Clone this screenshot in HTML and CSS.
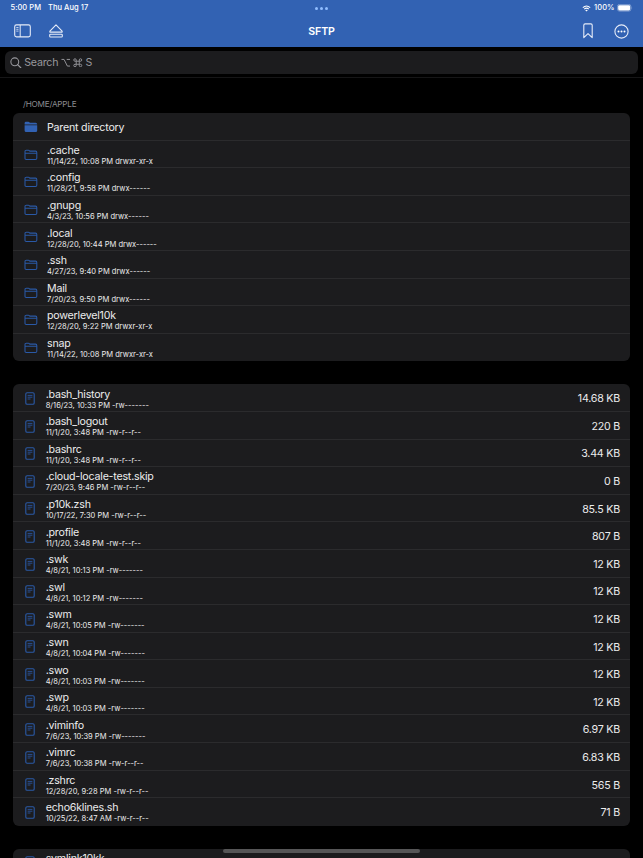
FILE: index.html
```
<!DOCTYPE html>
<html lang="en">
<head>
<meta charset="utf-8">
<title>SFTP</title>
<link rel="stylesheet" href="styles.css">
</head>
<body>
<svg class="defs" aria-hidden="true">
  <symbol id="folder" viewBox="0 0 14 12"><path d="M1 9.200V2.500q0-1.300 1.300-1.300h2.100q.5 0 .9.400l.5.500h5.700q1.300 0 1.300 1.300v5.800q0 1.300-1.300 1.300H2.300q-1.300 0-1.300-1.300zM1 4.300h11.800" fill="none" stroke="currentColor" stroke-width="1.050"/></symbol>
  <symbol id="folder-fill" viewBox="0 0 14 12"><path d="M.6 3.600V2.200Q.6.8 2 .8h2.400q.6 0 1 .4l.5.500h5.700q1.600 0 1.600 1.500v.4zM.6 4.200h12.600v5.200q0 1.500-1.500 1.500H2.100Q.6 10.900.6 9.400z" fill="currentColor"/></symbol>
  <symbol id="doc" viewBox="0 0 10 13"><rect x=".8" y=".8" width="8.400" height="11.400" rx="1.300" fill="none" stroke="currentColor" stroke-width="1.100"/><path d="M2.600 3.400h4.800M2.600 5.200h4.800M2.600 7h2.900" fill="none" stroke="currentColor" stroke-width=".85"/></symbol>
</svg>
<header class="top">
  <div class="status">
    <div class="status-left"><span>5:00 PM</span><span>Thu Aug 17</span></div>
    <div class="dots"><i></i><i></i><i></i></div>
    <div class="status-right">
      <svg class="wifi" viewBox="0 0 10 8"><path d="M.8 3Q5-.8 9.200 3M2.400 4.700q2.600-2.200 5.200 0" fill="none" stroke="#fff" stroke-width="1.200"/><path d="M3.500 5.900q1.500-1.200 3 0L5 7.400z" fill="#fff"/></svg>
      <span class="percent">100%</span>
      <svg class="battery" viewBox="0 0 17 8"><rect x=".4" y=".4" width="14.400" height="7.200" rx="2.200" fill="none" stroke="#9cb3dc" stroke-width=".7"/><rect x="1.200" y="1.200" width="12.800" height="5.600" rx="1.400" fill="#fff"/><path d="M15.600 2.800q1 1.200 0 2.400z" fill="#9cb3dc"/></svg>
    </div>
  </div>
  <nav class="nav">
    <div class="nav-side">
      <svg class="sidebar" viewBox="0 0 17 14"><rect x=".7" y=".9" width="15.600" height="12" rx="1.800" fill="none" stroke="#e6ecf8" stroke-width="1.100"/><path d="M6.200 1v12" stroke="#e6ecf8"/><path d="M2.300 3.500h2.200M2.300 5.300h2.200M2.300 7.100h2.200" stroke="#e6ecf8" stroke-width=".8"/></svg>
      <svg class="eject" viewBox="0 0 14 14"><path d="M7 .9 13.100 7.200q.4.900-.5.900H1.400q-.9 0-.5-.9z" fill="none" stroke="#e6ecf8" stroke-width="1.100" stroke-linejoin="round"/><rect x=".7" y="10.200" width="12.600" height="2.800" rx=".8" fill="none" stroke="#e6ecf8" stroke-width="1.100"/></svg>
    </div>
    <h1>SFTP</h1>
    <div class="nav-side end">
      <svg class="bookmark" viewBox="0 0 10 16"><path d="M.8 14.600V2.200Q.8.900 2.100.9h5.800q1.300 0 1.300 1.300v12.400L5 10.600z" fill="none" stroke="#e6ecf8" stroke-width="1.100" stroke-linejoin="round"/></svg>
      <svg class="more" viewBox="0 0 15 15"><circle cx="7.500" cy="7.500" r="6.600" fill="none" stroke="#e6ecf8" stroke-width="1.100"/><g fill="#fff"><circle cx="4.500" cy="7.500" r="1"/><circle cx="7.500" cy="7.500" r="1"/><circle cx="10.500" cy="7.500" r="1"/></g></svg>
    </div>
  </nav>
</header>
<div class="searchbar">
  <div class="search">
    <svg class="glass" viewBox="0 0 12 12"><circle cx="5" cy="5" r="4.100" fill="none" stroke="#98989d" stroke-width="1.100"/><path d="m8 8 3.200 3.200" stroke="#98989d" stroke-width="1.300" stroke-linecap="round"/></svg>
    <span>Search</span>
    <svg class="key" viewBox="0 0 10 10"><path d="M.5 1.500h2.700l3.500 7h2.800M6 1.500h3.500" fill="none" stroke="#98989d"/></svg>
    <svg class="key" viewBox="0 0 10 10"><path d="M3.400 3.400h3.200v3.200H3.400zM3.400 3.400H2.100A1.300 1.300 0 1 1 3.400 2.100zM6.600 3.400h1.300A1.300 1.300 0 1 0 6.600 2.100zM3.400 6.600H2.100A1.300 1.300 0 1 0 3.400 7.900zM6.600 6.600h1.300A1.300 1.300 0 1 1 6.600 7.900z" fill="none" stroke="#98989d" stroke-width=".95"/></svg>
    <span>S</span>
  </div>
</div>
<main>
  <h2>/HOME/APPLE</h2>
  <ul class="group folders">
    <li class="parent"><svg><use href="#folder-fill"/></svg><div><b>Parent directory</b></div></li>
    <li><svg><use href="#folder"/></svg><div><b>.cache</b><small>11/14/22, 10:08 PM drwxr-xr-x</small></div></li>
    <li><svg><use href="#folder"/></svg><div><b>.config</b><small>11/28/21, 9:58 PM drwx------</small></div></li>
    <li><svg><use href="#folder"/></svg><div><b>.gnupg</b><small>4/3/23, 10:56 PM drwx------</small></div></li>
    <li><svg><use href="#folder"/></svg><div><b>.local</b><small>12/28/20, 10:44 PM drwx------</small></div></li>
    <li><svg><use href="#folder"/></svg><div><b>.ssh</b><small>4/27/23, 9:40 PM drwx------</small></div></li>
    <li><svg><use href="#folder"/></svg><div><b>Mail</b><small>7/20/23, 9:50 PM drwx------</small></div></li>
    <li><svg><use href="#folder"/></svg><div><b>powerlevel10k</b><small>12/28/20, 9:22 PM drwxr-xr-x</small></div></li>
    <li><svg><use href="#folder"/></svg><div><b>snap</b><small>11/14/22, 10:08 PM drwxr-xr-x</small></div></li>
  </ul>
  <ul class="group files">
    <li><svg><use href="#doc"/></svg><div><b>.bash_history</b><small>8/16/23, 10:33 PM -rw-------</small></div><em>14.68 KB</em></li>
    <li><svg><use href="#doc"/></svg><div><b>.bash_logout</b><small>11/1/20, 3:48 PM -rw-r--r--</small></div><em>220 B</em></li>
    <li><svg><use href="#doc"/></svg><div><b>.bashrc</b><small>11/1/20, 3:48 PM -rw-r--r--</small></div><em>3.44 KB</em></li>
    <li><svg><use href="#doc"/></svg><div><b>.cloud-locale-test.skip</b><small>7/20/23, 9:46 PM -rw-r--r--</small></div><em>0 B</em></li>
    <li><svg><use href="#doc"/></svg><div><b>.p10k.zsh</b><small>10/17/22, 7:30 PM -rw-r--r--</small></div><em>85.5 KB</em></li>
    <li><svg><use href="#doc"/></svg><div><b>.profile</b><small>11/1/20, 3:48 PM -rw-r--r--</small></div><em>807 B</em></li>
    <li><svg><use href="#doc"/></svg><div><b>.swk</b><small>4/8/21, 10:13 PM -rw-------</small></div><em>12 KB</em></li>
    <li><svg><use href="#doc"/></svg><div><b>.swl</b><small>4/8/21, 10:12 PM -rw-------</small></div><em>12 KB</em></li>
    <li><svg><use href="#doc"/></svg><div><b>.swm</b><small>4/8/21, 10:05 PM -rw-------</small></div><em>12 KB</em></li>
    <li><svg><use href="#doc"/></svg><div><b>.swn</b><small>4/8/21, 10:04 PM -rw-------</small></div><em>12 KB</em></li>
    <li><svg><use href="#doc"/></svg><div><b>.swo</b><small>4/8/21, 10:03 PM -rw-------</small></div><em>12 KB</em></li>
    <li><svg><use href="#doc"/></svg><div><b>.swp</b><small>4/8/21, 10:03 PM -rw-------</small></div><em>12 KB</em></li>
    <li><svg><use href="#doc"/></svg><div><b>.viminfo</b><small>7/6/23, 10:39 PM -rw-------</small></div><em>6.97 KB</em></li>
    <li><svg><use href="#doc"/></svg><div><b>.vimrc</b><small>7/6/23, 10:38 PM -rw-r--r--</small></div><em>6.83 KB</em></li>
    <li><svg><use href="#doc"/></svg><div><b>.zshrc</b><small>12/28/20, 9:28 PM -rw-r--r--</small></div><em>565 B</em></li>
    <li><svg><use href="#doc"/></svg><div><b>echo6klines.sh</b><small>10/25/22, 8:47 AM -rw-r--r--</small></div><em>71 B</em></li>
  </ul>
  <ul class="group files">
    <li><svg><use href="#doc"/></svg><div><b>symlink10kk</b><small>&nbsp;</small></div></li>
  </ul>
</main>
<div class="home-indicator"></div>
</body>
</html>
```
FILE: styles.css
```
* { box-sizing: border-box; margin: 0; padding: 0; }
html, body { height: 858px; overflow: hidden; }
body {
  position: relative;
  background: #000;
  color: #ececed;
  font: 10.67px/13px Inter, "Liberation Sans", sans-serif;
  letter-spacing: -0.22px;
}
svg { display: block; flex: none; }
.defs { position: absolute; width: 0; height: 0; }

.top { height: 47px; background: #3262b3; color: #fff; }
.status {
  display: grid;
  grid-template-columns: 1fr auto 1fr;
  align-items: center;
  height: 16px;
  padding: 0 10.5px;
  font-size: 7.5px;
  font-weight: 500;
  line-height: 10px;
  letter-spacing: 0.04px;
}
.status-left { display: flex; gap: 7px; }
.dots { display: flex; gap: 2px; }
.dots i { width: 3px; height: 3px; border-radius: 50%; background: #91bdff; }
.status-right { display: flex; justify-content: flex-end; align-items: center; }
.wifi { width: 9px; height: 7px; }
.percent { margin: 0 2px 0 3px; }
.battery { width: 16px; height: 7.5px; }
.nav {
  display: grid;
  grid-template-columns: 1fr auto 1fr;
  align-items: center;
  height: 30px;
  padding: 0 14px;
}
.nav-side { display: flex; align-items: center; gap: 18px; }
.nav-side.end { justify-content: flex-end; gap: 21px; }
.nav h1 { font-size: 10.67px; font-weight: 600; line-height: 13px; letter-spacing: -0.1px; }
.sidebar { width: 17px; height: 14px; }
.eject { width: 14px; height: 14px; }
.bookmark { width: 10px; height: 16px; }
.more { width: 15px; height: 15px; }

.searchbar { height: 31px; padding: 4px 5px 0; border-bottom: 1px solid #161617; }
.search {
  display: flex;
  align-items: center;
  gap: 2.7px;
  height: 23px;
  padding-left: 5px;
  border-radius: 6px;
  background: #1c1c1e;
  color: #98989d;
  letter-spacing: -0.2px;
}
.glass { width: 11.5px; height: 11.5px; }
.key { width: 9.5px; height: 9.5px; }

main { padding: 20px 13px 0; }
h2 {
  height: 15px;
  padding: 0 10px;
  color: #8b8b90;
  font-size: 8.16px;
  font-weight: 400;
  line-height: 12px;
}
.group {
  list-style: none;
  margin-bottom: 23px;
  border-radius: 6px;
  background: #1c1c1e;
  overflow: hidden;
}
.group li {
  display: flex;
  align-items: center;
  height: 27.6px;
  padding: 1.6px 10px 0 11px;
  border-bottom: 1px solid #2b2b2d;
}
.group li:last-child { border-bottom-color: transparent; }
.group div { flex: 1; padding-top: 1.3px; }
.group b { display: block; font-weight: 400; line-height: 12px; }
.group small {
  display: block;
  height: 9px;
  font-size: 7.53px;
  line-height: 9px;
  letter-spacing: 0.01px;
}
.group em { font-style: normal; padding-top: 0.5px; }
.folders svg { width: 14px; height: 12px; margin-right: 9px; color: #2a59a6; }
.folders .parent svg { color: #3262b3; }
.files svg { width: 10px; height: 13px; margin: 0 10.5px 0 1.2px; color: #2a59a6; }
.home-indicator {
  position: absolute;
  left: 223px;
  bottom: 5px;
  width: 197px;
  height: 4px;
  border-radius: 2px;
  background: #565657;
}
```
